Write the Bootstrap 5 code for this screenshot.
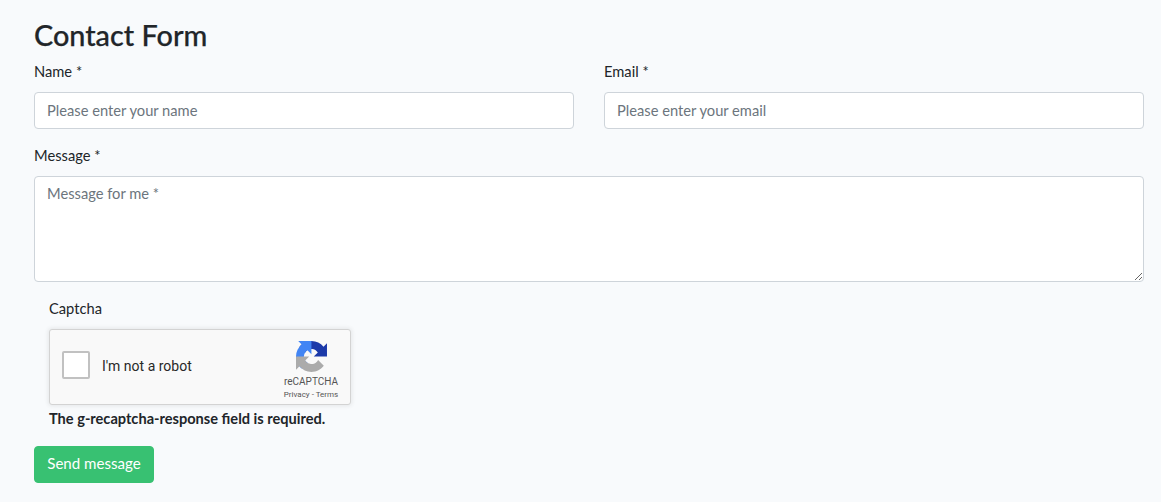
<!DOCTYPE html>
<html lang="en">
<head>
<meta charset="utf-8">
<title>Contact Form</title>
<link href="https://cdn.jsdelivr.net/npm/bootstrap@5.3.0/dist/css/bootstrap.min.css" rel="stylesheet">
<style>
body{background:#f8fafc;color:#212529;font-family:"Lato","Noto Sans",sans-serif;font-size:14.7px;line-height:1.6}
.page-wrap{padding:14px 17px 0 34px}
.page-title{font-size:28.8px;font-weight:500;line-height:1.2;margin:4px 0 8px;-webkit-text-stroke:.25px #212529}
.form-row{--bs-gutter-x:30px}
.field-label{display:block;margin-bottom:10px;line-height:21px}
.form-control.field-input{font-size:14.7px;height:37px;padding:6px 12px;border-color:#ced4da;border-radius:4px;line-height:1.6}
.form-control.field-input::placeholder{color:#6c757d}
textarea.form-control.field-area{height:106px;font-size:14.7px;padding:5px 12px;border-color:#ced4da;border-radius:4px}
textarea.form-control.field-area::placeholder{color:#6c757d}
.field-group{margin-bottom:16px}
.captcha-block{padding-left:15px;margin-bottom:16px}
.rc-box{width:302px;height:76px;background:#f9f9f9;border:1px solid #d3d3d3;border-radius:3px;box-shadow:0 0 4px 1px rgba(0,0,0,.08);padding:0 10px 3px 12px;font-family:"Roboto",sans-serif}
.rc-check{width:28px;height:28px;background:#fff;border:2px solid #c1c1c1;border-radius:2px}
.rc-text{font-size:14px;color:#282828;margin-left:12px;line-height:1;padding-top:2px}
.rc-brand{width:58px;color:#555;line-height:1}
.rc-logo{width:31px;height:31px;display:block;margin-top:11px}
.rc-name{font-size:10px;margin-top:5px}
.rc-terms{font-size:8px;margin-top:4px}
.rc-error{font-weight:700;font-size:14.6px;line-height:23px;margin-top:2px}
.btn.send-btn{background:#38c172;border-color:#38c172;color:#fff;font-size:15.1px;padding:5px 12px 7px;height:37px;width:120px;line-height:23px;border-radius:4px}
</style>
</head>
<body>
<div class="page-wrap">
<h3 class="page-title">Contact Form</h3>
<form>
<div class="row form-row">
<div class="col-6 field-group"><label class="field-label" for="n">Name *</label><input id="n" class="form-control field-input" placeholder="Please enter your name"></div>
<div class="col-6 field-group"><label class="field-label" for="e">Email *</label><input id="e" class="form-control field-input" placeholder="Please enter your email"></div>
</div>
<div class="field-group"><label class="field-label" for="m">Message *</label><textarea id="m" class="form-control field-area" placeholder="Message for me *"></textarea></div>
<div class="captcha-block">
<label class="field-label">Captcha</label>
<div class="rc-box d-flex align-items-center">
<div class="rc-check"></div>
<div class="rc-text flex-grow-1">I'm not a robot</div>
<div class="rc-brand d-flex flex-column align-items-center align-self-start">
<svg class="rc-logo" viewBox="0 0 64 64"><path d="M64 31.955l-.033-1.37V4.687l-7.16 7.16C50.948 4.674 42.033.093 32.05.093c-10.4 0-19.622 4.96-25.458 12.64l11.736 11.86a15.55 15.55 0 0 1 4.754-5.334c2.05-1.6 4.952-2.906 8.968-2.906.485 0 .86.057 1.135.163 4.976.393 9.288 3.14 11.828 7.124l-8.307 8.307 26.3.001" fill="#1c3aa9"/><path d="M31.862 0l-1.37.033H4.594l7.16 7.16C4.58 13.05 0 21.967 0 31.95c0 10.4 4.96 19.622 12.64 25.458l11.86-11.736a15.55 15.55 0 0 1-5.334-4.754c-1.6-2.05-2.906-4.952-2.906-8.968 0-.485.057-.86.163-1.135.393-4.976 3.14-9.288 7.124-11.828l8.307 8.307.001-26.3" fill="#4285f4"/><path d="M.001 31.955l.033 1.37v25.9l7.16-7.16c5.86 7.173 14.774 11.754 24.76 11.754 10.39 0 19.622-4.96 25.458-12.64l-11.736-11.86a15.55 15.55 0 0 1-4.754 5.334c-2.05 1.6-4.952 2.906-8.968 2.906-.485 0-.86-.057-1.135-.163-4.976-.393-9.288-3.14-11.828-7.124l8.307-8.307-26.3-.001" fill="#ababab"/></svg>
<div class="rc-name">reCAPTCHA</div>
<div class="rc-terms">Privacy - Terms</div>
</div>
</div>
<div class="rc-error">The g-recaptcha-response field is required.</div>
</div>
<button type="button" class="btn send-btn">Send message</button>
</form>
</div>
<script src="https://cdn.jsdelivr.net/npm/bootstrap@5.3.0/dist/js/bootstrap.bundle.min.js"></script>
</body>
</html>
